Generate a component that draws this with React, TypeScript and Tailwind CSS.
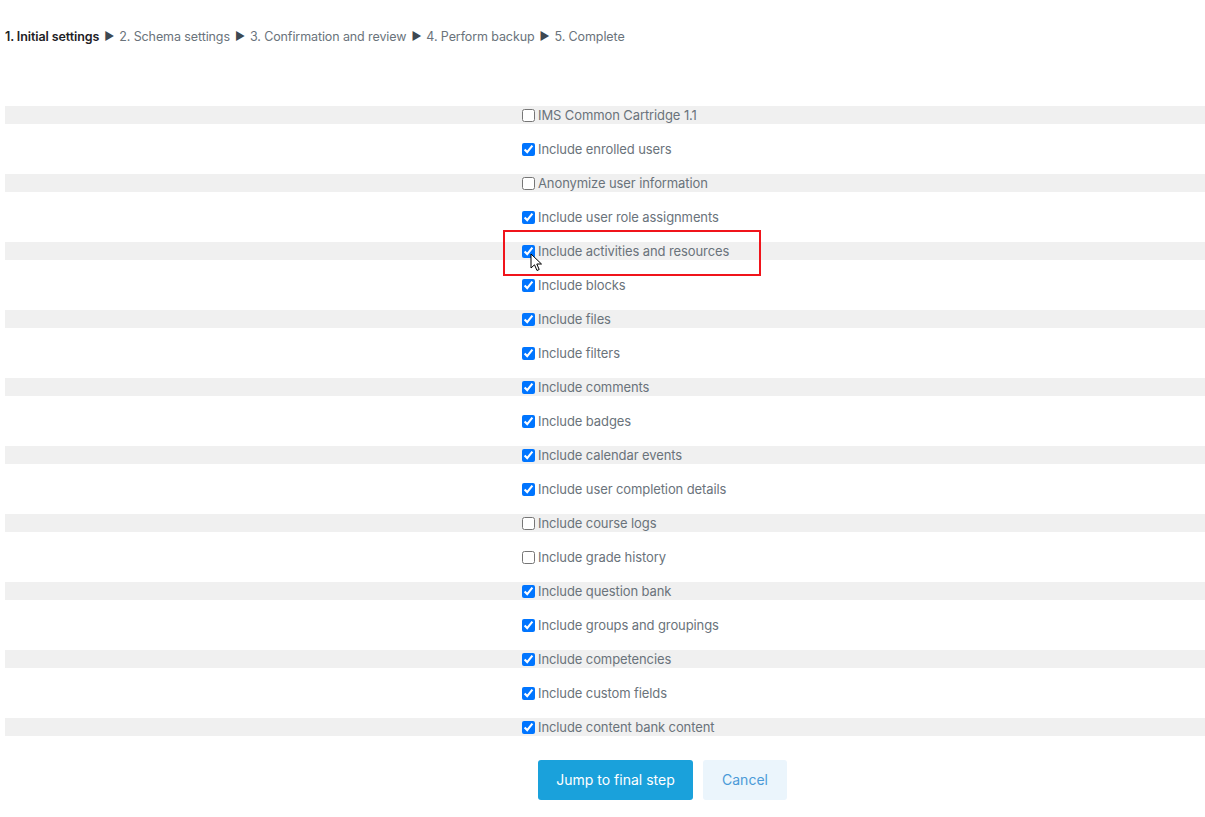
import React from "react";

const items: { label: string; checked: boolean }[] = [
  { label: "IMS Common Cartridge 1.1", checked: false },
  { label: "Include enrolled users", checked: true },
  { label: "Anonymize user information", checked: false },
  { label: "Include user role assignments", checked: true },
  { label: "Include activities and resources", checked: true },
  { label: "Include blocks", checked: true },
  { label: "Include files", checked: true },
  { label: "Include filters", checked: true },
  { label: "Include comments", checked: true },
  { label: "Include badges", checked: true },
  { label: "Include calendar events", checked: true },
  { label: "Include user completion details", checked: true },
  { label: "Include course logs", checked: false },
  { label: "Include grade history", checked: false },
  { label: "Include question bank", checked: true },
  { label: "Include groups and groupings", checked: true },
  { label: "Include competencies", checked: true },
  { label: "Include custom fields", checked: true },
  { label: "Include content bank content", checked: true },
];

function Arrow() {
  return <span className="text-[#3d4852] text-[11px] mx-[5px]">▶</span>;
}

function Cursor() {
  return (
    <svg
      className="absolute left-[8px] top-[8px]"
      width="13"
      height="19"
      viewBox="0 0 13 19"
    >
      <path
        d="M1 1 L1 15 L4.5 11.8 L7 17.5 L9.2 16.5 L6.8 11 L11.5 11 Z"
        fill="white"
        stroke="black"
        strokeWidth="1"
        strokeLinejoin="round"
      />
    </svg>
  );
}

export default function App() {
  return (
    <div
      className="w-[1205px] h-[817px] bg-white relative overflow-hidden"
      style={{ fontFamily: "Inter, 'Open Sans', sans-serif" }}
    >
      <div className="pl-[5px] pt-[28px] text-[12.5px] leading-[17px] text-[#6a737b] flex items-center tracking-[-0.1px]">
        <span className="font-semibold text-[#1d2125]">1. Initial settings</span>
        <Arrow />
        <span>2. Schema settings</span>
        <Arrow />
        <span>3. Confirmation and review</span>
        <Arrow />
        <span>4. Perform backup</span>
        <Arrow />
        <span>5. Complete</span>
      </div>

      <div className="mt-[61px] ml-[5px] flex flex-col gap-[16px]">
        {items.map((it, i) => (
          <div
            key={it.label}
            className={`h-[18px] flex items-center pl-[517px] ${
              i % 2 === 0 ? "bg-[#f0f0f0]" : ""
            }`}
          >
            <div className="relative flex items-center">
              <input
                type="checkbox"
                defaultChecked={it.checked}
                className="w-[13px] h-[13px] m-0 mr-[3px] accent-[#0075ff]"
              />
              {i === 4 && <Cursor />}
            </div>
            <span className="text-[13px] text-[#6a737b] leading-[18px] tracking-[-0.1px]">
              {it.label}
            </span>
            {i === 4 && (
              <div className="absolute left-[503px] top-[230px] w-[258px] h-[46px] border-[2.5px] border-[#f0141b] pointer-events-none" />
            )}
          </div>
        ))}
      </div>

      <div className="mt-[24px] pl-[538px] flex gap-[10px]">
        <button className="h-[40px] w-[155px] rounded-[3px] bg-[#1aa1db] text-white text-[14px] pb-[1px]">
          Jump to final step
        </button>
        <button className="h-[40px] w-[84px] rounded-[3px] bg-[#ebf5fc] text-[#4a9ad8] text-[14px] pb-[1px]">
          Cancel
        </button>
      </div>
    </div>
  );
}
